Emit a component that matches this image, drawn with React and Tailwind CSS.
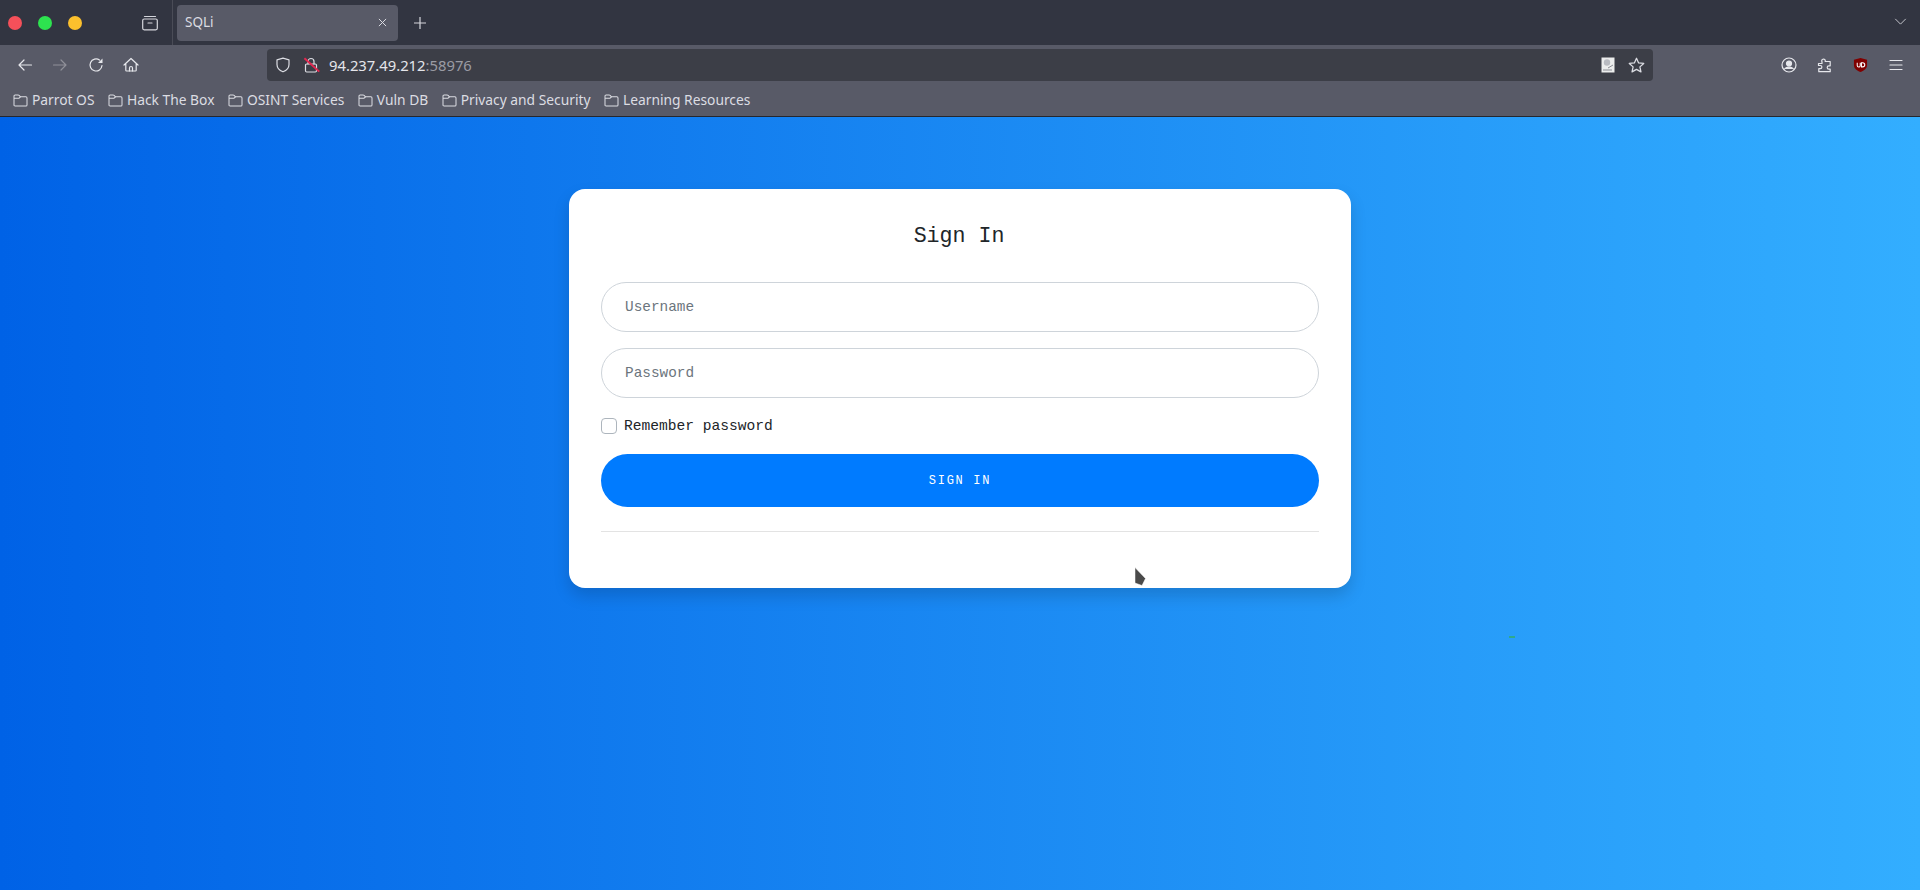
import React from 'react';

const uiFont = "font-['Noto_Sans',sans-serif]";
const monoFont = "font-['Liberation_Mono',monospace]";

const bookmarks = ['Parrot OS', 'Hack The Box', 'OSINT Services', 'Vuln DB', 'Privacy and Security', 'Learning Resources'];

// Firefox toolbar icons, all on a 16 box
const Icon = ({ children, className = 'w-4 h-4 text-[#e6e7ec]', fill = 'none' }) => (
  <svg viewBox="0 0 16 16" fill={fill} stroke={fill === 'none' ? 'currentColor' : 'none'} strokeWidth="1.2" strokeLinecap="round" strokeLinejoin="round" className={className}>
    {children}
  </svg>
);

const NavButton = ({ children }) => (
  <div className="w-[35.5px] h-8 flex items-center justify-center shrink-0">{children}</div>
);

const FolderIcon = () => (
  <svg viewBox="0 0 16 14" fill="none" stroke="currentColor" strokeWidth="1.1" strokeLinejoin="round" className="w-[15px] h-[13px] shrink-0 text-[#dcdde3]">
    <path d="M1 3V2.2C1 1.5 1.5 1 2.2 1h3.3c.4 0 .7.2 1 .5L8 3h5.8c.7 0 1.2.5 1.2 1.2v7.6c0 .7-.5 1.2-1.2 1.2H2.2C1.500 13 1 12.500 1 11.800V3z" />
    <path d="M1 4.500h5.500L8 3" />
  </svg>
);

const TabBar = () => (
  <div className="h-[45px] bg-[#323541] flex items-center shrink-0">
    <div className="w-[172px] h-full flex items-center border-r border-[#4a4c57] box-content">
      <div className="flex items-center gap-[16px] pl-2">
        <span className="w-[14px] h-[14px] rounded-full bg-[#f5505a]" />
        <span className="w-[14px] h-[14px] rounded-full bg-[#2de34f]" />
        <span className="w-[14px] h-[14px] rounded-full bg-[#fbc02d]" />
      </div>
      <div className="ml-[60px]">
        <Icon className="w-4 h-4 text-[#d5d6dc]">
          <path d="M2.500 1.500h11" />
          <rect x="0.700" y="4" width="14.600" height="10.800" rx="1.500" />
          <path d="M6 8h4" />
        </Icon>
      </div>
    </div>
    <div className="ml-[4px] w-[221px] h-9 bg-[#585a67] rounded flex items-center justify-between pl-2 pr-[11px]">
      <span className={`${uiFont} text-[13.500px] text-[#dcdde3]`}>SQLi</span>
      <svg viewBox="0 0 10 10" stroke="currentColor" strokeWidth="1.100" className="w-[9px] h-[9px] text-[#dcdde3]">
        <path d="M1 1l8 8M9 1l-8 8" />
      </svg>
    </div>
    <svg viewBox="0 0 12 12" stroke="currentColor" strokeWidth="1.200" className="ml-4 w-3 h-3 text-[#d5d6dc]">
      <path d="M6 0v12M0 6h12" />
    </svg>
    <svg viewBox="0 0 14 8" fill="none" stroke="currentColor" strokeWidth="1.100" className="ml-auto mr-[13px] w-[13px] h-[7px] mb-[3px] text-[#c8c9d0]">
      <path d="M1 1l6 6 6-6" />
    </svg>
  </div>
);

const NavBar = () => (
  <div className="h-9 bg-[#585a67] flex shrink-0 pl-[7px] pr-[6px]">
    <div className="flex items-end">
      <NavButton>
        <Icon>
          <path d="M14.500 8H2M7 3L2 8l5 5" />
        </Icon>
      </NavButton>
      <NavButton>
        <Icon className="w-4 h-4 text-[#8f9099]">
          <path d="M1.500 8H14M9 3l5 5-5 5" />
        </Icon>
      </NavButton>
      <NavButton>
        <Icon>
          <path d="M14 8.500a6 6 0 1 1-2.500-5.400" />
          <path d="M14.500 1.500v4.500H10z" fill="currentColor" stroke="none" />
        </Icon>
      </NavButton>
      <NavButton>
        <Icon>
          <path d="M1 8l7-6.500L15 8M2.800 6.500v6.700c0 .5.400.8.800.8h8.800c.4 0 .8-.3.800-.8V6.500" />
          <path d="M6.500 14v-3a1.500 1.500 0 0 1 3 0v3" />
        </Icon>
      </NavButton>
    </div>
    <div className="ml-[118px] w-[1386px] h-8 mt-1 bg-[#3c3e47] rounded flex items-center pl-[8px] pr-[8px]">
      <Icon className="w-4 h-4 text-[#dcdde3]">
        <path d="M8 1.200l6 1.600v4.700c0 3.300-2.500 5.900-6 7.300-3.500-1.400-6-4-6-7.300V2.800l6-1.600z" />
      </Icon>
      <div className="relative w-4 h-4 ml-3">
        <Icon className="w-4 h-4 text-[#dcdde3]">
          <rect x="2.500" y="7" width="11" height="8" rx="1.200" />
          <path d="M5 7V4.500a3 3 0 0 1 6 0V7" />
        </Icon>
        <div className="absolute left-[-1px] top-[7px] w-5 h-[1.500px] bg-[#e22850] rotate-[42deg]" />
      </div>
      <span className={`${uiFont} ml-[10px] text-[14.800px] text-[#e4e5ea]`}>
        94.237.49.212<span className="text-[#9a9ba3]">:58976</span>
      </span>
      <div className="ml-auto flex items-center gap-[13px]">
        <svg viewBox="0 0 14 16" className="w-[14px] h-4">
          <path d="M0.500 0.500h13v15h-13z" fill="#eceded" />
          <circle cx="6" cy="5.500" r="3.200" fill="#b9bbc1" />
          <path d="M2 13h9M7 11l5-3" stroke="#8a8c93" strokeWidth="1" />
        </svg>
        <Icon className="w-[17px] h-[17px] text-[#dcdde3]">
          <path d="M8 1.200l2 4.400 4.800.5-3.600 3.200 1 4.700L8 11.600 3.800 14l1-4.700L1.200 6.100 6 5.600z" />
        </Icon>
      </div>
    </div>
    <div className="ml-auto flex items-end">
      <NavButton>
        <div className="pr-[2px]">
          <Icon>
            <circle cx="8" cy="8" r="7" />
            <circle cx="8" cy="6.500" r="2.500" fill="currentColor" />
            <path d="M3.500 12c1-1.300 2.500-1.800 4.500-1.800s3.500.5 4.500 1.800" fill="currentColor" />
          </Icon>
        </div>
      </NavButton>
      <NavButton>
        <Icon>
          <path d="M1.500 6.500h3.500V4.500h-.2a1.800 1.800 0 1 1 3.400-1.200V4.500h5v4.300h-1.300a1.700 1.700 0 1 0 0 3.400h1.300v2.500H1.800v-3h1.500a1.600 1.600 0 1 0 0-3.200H1.500z" />
        </Icon>
      </NavButton>
      <NavButton>
        <svg viewBox="0 0 16 16" className="w-[15px] h-[16px]">
          <path d="M8 0.500l7 1.800v6c0 3.200-2.800 5.800-7 7.200-4.200-1.400-7-4-7-7.200v-6l7-1.800z" fill="#800000" />
          <path d="M4.500 5.500v3a1.600 1.600 0 0 0 3.200 0v-3M9 5.500v4.500h1.300a2.200 2.200 0 0 0 0-4.500H9z" fill="none" stroke="#fff" strokeWidth="1.100" />
        </svg>
      </NavButton>
      <NavButton>
        <Icon>
          <path d="M2 3.500h12M2 8h12M2 12.500h12" />
        </Icon>
      </NavButton>
    </div>
  </div>
);

const BookmarkBar = () => (
  <div className="h-[36px] bg-[#585a67] border-b border-[#26272d] flex items-center pl-[13px] pt-[4px] gap-[13.500px] shrink-0">
    {bookmarks.map((name) => (
      <div key={name} className="flex items-center gap-[4px]">
        <FolderIcon />
        <span className={`${uiFont} text-[13.800px] text-[#dcdde3] whitespace-nowrap`}>{name}</span>
      </div>
    ))}
  </div>
);

const LoginCard = () => (
  <div className={`${monoFont} w-[782px] h-[399px] bg-white rounded-2xl shadow-[0_8px_16px_rgba(0,0,0,0.15)] px-8 pt-[34px]`}>
    <h5 className="text-[21.600px] leading-[26px] text-[#212529] text-center mb-[33px] pr-[2px]">Sign In</h5>
    <form>
      <input
        type="text"
        placeholder="Username"
        className="block w-full h-[50px] rounded-full border border-[#ced4da] px-[23px] text-[14.400px] outline-none placeholder:text-[#6c757d] mb-4"
      />
      <input
        type="password"
        placeholder="Password"
        className="block w-full h-[50px] rounded-full border border-[#ced4da] px-[23px] text-[14.400px] outline-none placeholder:text-[#6c757d] mb-5"
      />
      <label className="flex items-center gap-[7px] h-4 mb-5 text-[14.600px] text-[#212529]">
        <span className="w-4 h-4 rounded border border-[#adb5bd] bg-white shrink-0" />
        <span className="pt-[1px]">Remember password</span>
      </label>
      <button type="button" className="block w-full h-[53px] rounded-full bg-[#007bff] text-white text-[12px] tracking-[1.700px] font-normal">
        SIGN IN
      </button>
      <hr className="mt-6 border-[#e3e3e3]" />
    </form>
  </div>
);

const App = () => (
  <div className="h-screen flex flex-col overflow-hidden">
    <TabBar />
    <NavBar />
    <BookmarkBar />
    <main className="relative flex-1 bg-[linear-gradient(to_right,#0062e6,#33aeff)] flex justify-center pt-[72px]">
      <LoginCard />
      {/* mouse pointer caught by the screenshot */}
      <svg viewBox="0 0 12 20" className="absolute left-[1134px] top-[450px] w-3 h-5">
        <path d="M1 0.500L11.500 11.500L8 18.500L1 16z" fill="#4a4a4a" stroke="#fff" strokeWidth="0.500" />
      </svg>
      <div className="absolute left-[1509px] top-[519px] w-[6px] h-[2px] bg-[#2fa98c]" />
    </main>
  </div>
);

export default App;
